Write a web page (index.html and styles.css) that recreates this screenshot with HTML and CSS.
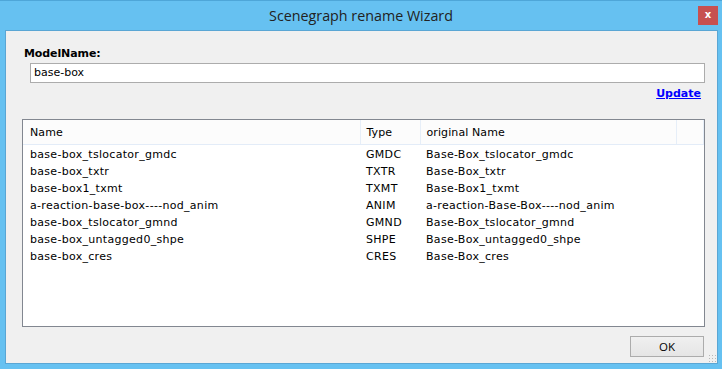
FILE: index.html
```html
<!DOCTYPE html>
<html>
<head>
<meta charset="utf-8">
<link rel="stylesheet" href="styles.css">
</head>
<body>
<div class="window">
  <div class="titlebar">
    <span></span>
    <span class="title">Scenegraph rename Wizard</span>
    <span class="close-wrap"><span class="close">x</span></span>
  </div>
  <div class="client">
    <div class="label">ModelName:</div>
    <div class="input">base-box</div>
    <div class="update-row"><a class="update" href="#">Update</a></div>
    <div class="listview">
      <table>
        <colgroup>
          <col class="c1"><col class="c2"><col class="c3"><col class="c4">
        </colgroup>
        <thead>
          <tr><th>Name</th><th>Type</th><th>original Name</th><th></th></tr>
        </thead>
        <tbody>
          <tr><td>base-box_tslocator_gmdc</td><td>GMDC</td><td>Base-Box_tslocator_gmdc</td><td></td></tr>
          <tr><td>base-box_txtr</td><td>TXTR</td><td>Base-Box_txtr</td><td></td></tr>
          <tr><td>base-box1_txmt</td><td>TXMT</td><td>Base-Box1_txmt</td><td></td></tr>
          <tr><td>a-reaction-base-box----nod_anim</td><td>ANIM</td><td>a-reaction-Base-Box----nod_anim</td><td></td></tr>
          <tr><td>base-box_tslocator_gmnd</td><td>GMND</td><td>Base-Box_tslocator_gmnd</td><td></td></tr>
          <tr><td>base-box_untagged0_shpe</td><td>SHPE</td><td>Base-Box_untagged0_shpe</td><td></td></tr>
          <tr><td>base-box_cres</td><td>CRES</td><td>Base-Box_cres</td><td></td></tr>
        </tbody>
      </table>
    </div>
    <div class="footer">
      <button class="ok">OK</button>
      <span class="grip"></span>
    </div>
  </div>
</div>
</body>
</html>
```

FILE: styles.css
```css
html, body {
  margin: 0;
  padding: 0;
}
body {
  width: 722px;
  height: 369px;
  overflow: hidden;
  background: #66c1f1;
  font-family: "DejaVu Sans", Verdana, sans-serif;
  font-size: 11px;
  color: #000;
}
.window {
  height: 369px;
  box-sizing: border-box;
  border-top: 1px solid #4ea6d8;
  display: flex;
  flex-direction: column;
}
.titlebar {
  height: 29px;
  display: grid;
  grid-template-columns: 1fr auto 1fr;
  align-items: start;
}
.title {
  font-family: "Open Sans", "Noto Sans", sans-serif;
  font-size: 14.3px;
  color: #222;
  line-height: 30px;
}
.close-wrap {
  display: flex;
  justify-content: flex-end;
  padding: 5px 4px 0 0;
}
.close {
  width: 20px;
  height: 19px;
  background: #c75050;
  color: #fff;
  font-family: "DejaVu Sans", sans-serif;
  font-weight: bold;
  font-size: 10px;
  line-height: 18px;
  text-align: center;
}
.client {
  flex: 1;
  margin: 0 4px 5px 5px;
  border: 1px solid #5aa6d4;
  background: #f0f0f0;
  padding: 15px 12px 0 16px;
  display: flex;
  flex-direction: column;
  position: relative;
}
.label {
  font-weight: bold;
  color: #000;
  padding-left: 2px;
  height: 16px;
  line-height: 16px;
  letter-spacing: -0.1px;
}
.input {
  margin: 1px 0 0 8px;
  height: 20px;
  box-sizing: border-box;
  border: 1px solid #acacac;
  background: #fff;
  padding-left: 3px;
  line-height: 18px;
}
.update-row {
  display: flex;
  justify-content: flex-end;
  padding-right: 4px;
  height: 36px;
}
.update {
  color: #0000ff;
  font-weight: bold;
  text-decoration: underline;
  line-height: 22px;
  height: 22px;
}
.listview {
  height: 208px;
  box-sizing: border-box;
  border: 1px solid #828790;
  background: #fff;
  overflow: hidden;
}
table {
  border-collapse: collapse;
  table-layout: fixed;
  width: 680px;
}
col.c1 { width: 337px; }
col.c2 { width: 60px; }
col.c3 { width: 256px; }
col.c4 { width: 27px; }
th {
  font-weight: normal;
  text-align: left;
  height: 24px;
  padding: 0 0 0 7px;
  background: #fcfcfc;
  border-right: 1px solid #e6eef8;
  border-bottom: 1px solid #e3ecf8;
  white-space: nowrap;
  letter-spacing: 0.1px;
}
td {
  height: 17px;
  padding: 0 0 0 7px;
  white-space: nowrap;
  line-height: 17px;
  letter-spacing: 0.3px;
}
th:nth-child(2), td:nth-child(2) { padding-left: 6px; }
th:nth-child(3), td:nth-child(3) { padding-left: 6px; }
tbody tr:first-child td { padding-top: 1px; }
.footer {
  display: flex;
  justify-content: flex-end;
  padding: 9px 0 0 0;
}
.ok {
  width: 74px;
  height: 21px;
  margin-right: 1px;
  border: 1px solid #acacac;
  background: linear-gradient(#f0f0f0, #e5e5e5);
  font-family: "Open Sans", sans-serif;
  font-size: 11.5px;
  color: #000;
  padding: 0;
}
.grip {
  position: absolute;
  right: 1px;
  bottom: 1px;
  width: 8px;
  height: 8px;
  background-image: radial-gradient(circle, #b8b8b8 0.9px, transparent 1px);
  background-size: 3px 3px;
  background-position: 0 0;
}
```
